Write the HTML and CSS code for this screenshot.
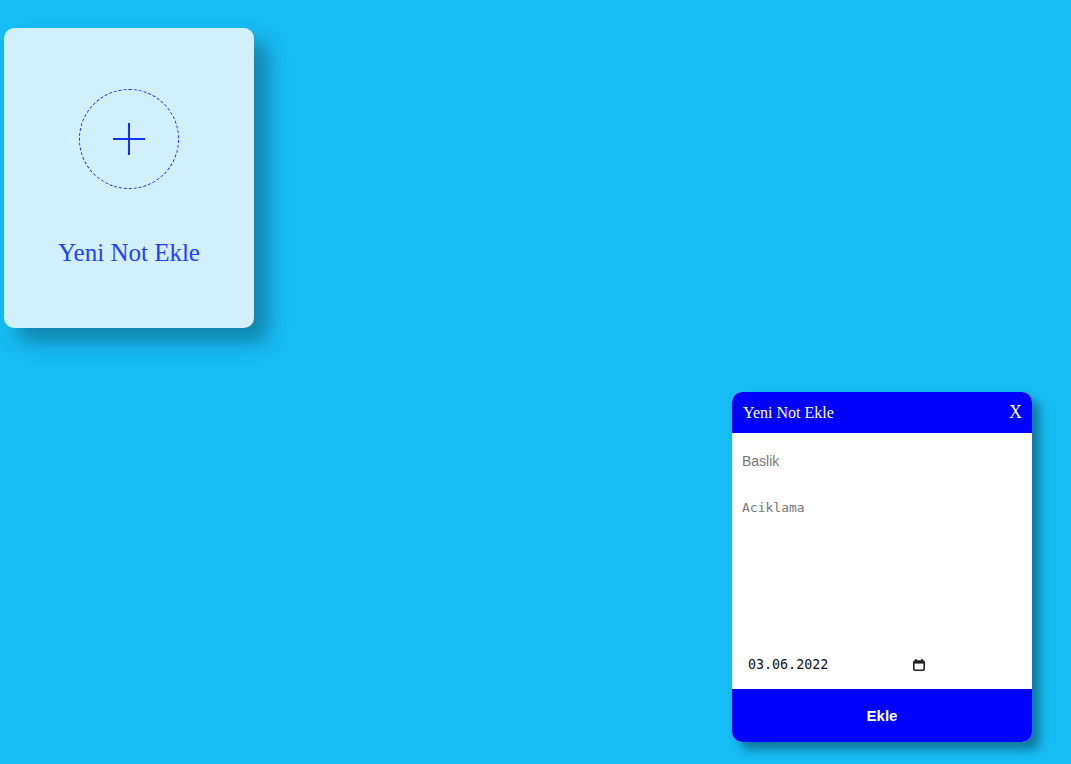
FILE: index.html
```html
<!DOCTYPE html>
<html lang="tr">
<head>
<meta charset="utf-8">
<link rel="stylesheet" href="styles.css">
</head>
<body>
<main class="notes">
  <div class="add-card">
    <div class="plus-circle">
      <svg width="34" height="34" viewBox="0 0 34 34"><path d="M17 1V33M1 17H33" stroke="#1030ff" stroke-width="2" fill="none"/></svg>
    </div>
    <p class="add-label">Yeni Not Ekle</p>
  </div>
</main>
<div class="modal">
  <div class="modal-head">
    <span class="modal-title">Yeni Not Ekle</span>
    <span class="modal-close">X</span>
  </div>
  <div class="modal-body">
    <input class="field-title" type="text" placeholder="Baslik">
    <textarea class="field-desc" placeholder="Aciklama"></textarea>
    <div class="field-date">
      <span class="date-value">03.06.2022</span>
      <svg class="date-icon" width="14" height="14" viewBox="0 0 14 14"><path d="M4 1V3M10 1V3" stroke="#222" stroke-width="1.6"/><rect x="1.8" y="3" width="10.4" height="9.2" rx="1.2" fill="none" stroke="#222" stroke-width="1.6"/><rect x="1.8" y="3" width="10.4" height="2.6" fill="#222"/></svg>
    </div>
  </div>
  <button class="modal-btn">Ekle</button>
</div>
</body>
</html>
```
FILE: styles.css
```css
html, body {
  margin: 0;
  height: 100%;
}
body {
  background: #16bcf4;
  font-family: "Liberation Serif", serif;
  overflow: hidden;
}
.notes {
  display: flex;
  padding: 28px 0 0 4px;
}
.add-card {
  width: 250px;
  height: 300px;
  background: #d1f0fc;
  border-radius: 10px;
  box-shadow: 14px 14px 20px rgba(0, 0, 0, 0.3);
  display: flex;
  flex-direction: column;
  align-items: center;
  box-sizing: border-box;
  padding-top: 61px;
}
.plus-circle {
  width: 100px;
  height: 100px;
  box-sizing: border-box;
  border: 1px dashed #1030ff;
  border-radius: 50%;
  display: flex;
  align-items: center;
  justify-content: center;
}
.add-label {
  margin: 50px 0 0;
  font-size: 25px;
  color: #2340ff;
}
.modal {
  position: absolute;
  left: 732px;
  top: 392px;
  width: 300px;
  height: 350px;
  background: #fff;
  border-radius: 10px;
  overflow: hidden;
  box-shadow: 8px 8px 10px rgba(0, 0, 0, 0.35);
  display: flex;
  flex-direction: column;
}
.modal-head {
  height: 41px;
  background: #0000ff;
  color: #fff;
  display: flex;
  align-items: center;
  justify-content: space-between;
  padding: 0 10px 0 11px;
}
.modal-title {
  font-size: 16px;
}
.modal-close {
  font-size: 18px;
}
.modal-body {
  flex: 1;
  display: flex;
  flex-direction: column;
}
.field-title {
  border: none;
  outline: none;
  padding: 10px;
  margin-top: 10px;
  font-family: "Liberation Sans", Arial, sans-serif;
  font-size: 14px;
}
.field-title::placeholder, .field-desc::placeholder {
  color: #777;
}
.field-desc {
  border: none;
  outline: none;
  resize: none;
  padding: 10px;
  margin-top: 11px;
  height: 140px;
  font-family: "DejaVu Sans Mono", monospace;
  font-size: 13px;
}
.field-date {
  display: flex;
  align-items: center;
  margin: 7px 0 0 16px;
  width: 178px;
  justify-content: space-between;
  font-family: "DejaVu Sans Mono", monospace;
  font-size: 13.33px;
  color: #111;
}
.date-icon {
  display: block;
}
.modal-btn {
  height: 53px;
  border: none;
  background: #0000ff;
  color: #fff;
  font-family: "Liberation Sans", Arial, sans-serif;
  font-size: 15px;
  font-weight: bold;
  padding: 0;
}
```
